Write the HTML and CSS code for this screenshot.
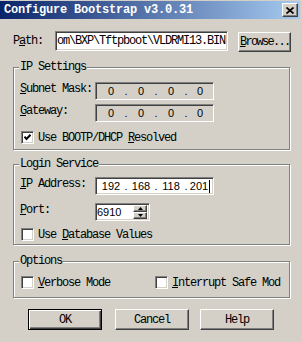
FILE: index.html
```html
<!DOCTYPE html>
<html>
<head>
<meta charset="utf-8">
<link rel="stylesheet" href="styles.css">
</head>
<body>
<div class="window">
  <div class="titlebar">
    <span class="title">Configure Bootstrap v3.0.31</span>
    <span class="close"><svg width="8" height="7" viewBox="0 0 8 7"><path d="M0.5 0.5 L7.5 6.5 M7.5 0.5 L0.5 6.5" stroke="#000" stroke-width="1.7" fill="none"/></svg></span>
  </div>
  <div class="content">
    <div class="path-row">
      <span class="path-label">P<u>a</u>th:</span>
      <div class="sunken path-box">om\BXP\Tftpboot\VLDRMI13.BIN</div>
      <button class="btn browse"><u>B</u>rowse...</button>
    </div>

    <fieldset class="group ip-group">
      <legend>IP Settings</legend>
      <div class="row">
        <span class="label"><u>S</u>ubnet Mask:</span>
        <div class="sunken ipbox disabled">
          <span class="seg">0</span><span class="dot">.</span><span class="seg">0</span><span class="dot">.</span><span class="seg">0</span><span class="dot">.</span><span class="seg last">0</span>
        </div>
      </div>
      <div class="row row-gap">
        <span class="label"><u>G</u>ateway:</span>
        <div class="sunken ipbox disabled">
          <span class="seg">0</span><span class="dot">.</span><span class="seg">0</span><span class="dot">.</span><span class="seg">0</span><span class="dot">.</span><span class="seg last">0</span>
        </div>
      </div>
      <div class="check-row cr-ip">
        <span class="sunken checkbox"><svg width="7" height="7" viewBox="0 0 7 7"><path d="M0.5 2.5 L2.5 5 L6.5 0.8" stroke="#000" stroke-width="2" fill="none"/></svg></span>
        <span class="check-label">Use BOOTP/DHCP <u>R</u>esolved</span>
      </div>
    </fieldset>

    <fieldset class="group login-group">
      <legend>Login Service</legend>
      <div class="row">
        <span class="label"><u>I</u>P Address:</span>
        <div class="sunken ipbox white">
          <span class="seg">192</span><span class="dot">.</span><span class="seg">168</span><span class="dot">.</span><span class="seg">118</span><span class="dot">.</span><span class="seg last">201<span class="caret"></span></span>
        </div>
      </div>
      <div class="row port-row">
        <span class="label"><u>P</u>ort:</span>
        <div class="sunken portbox">
          <span class="port-val">6910</span>
          <span class="spin">
            <span class="spin-btn"><svg width="5" height="3" viewBox="0 0 5 3"><path d="M2.5 0 L5 3 L0 3 Z" fill="#000"/></svg></span>
            <span class="spin-btn"><svg width="5" height="3" viewBox="0 0 5 3"><path d="M0 0 L5 0 L2.5 3 Z" fill="#000"/></svg></span>
          </span>
        </div>
      </div>
      <div class="check-row cr-login">
        <span class="sunken checkbox"></span>
        <span class="check-label">Use <u>D</u>atabase Values</span>
      </div>
    </fieldset>

    <fieldset class="group opt-group">
      <legend>Options</legend>
      <div class="check-row opt-row">
        <div class="opt-item first">
          <span class="sunken checkbox"></span>
          <span class="check-label"><u>V</u>erbose Mode</span>
        </div>
        <div class="opt-item">
          <span class="sunken checkbox"></span>
          <span class="check-label"><u>I</u>nterrupt Safe Mod</span>
        </div>
      </div>
    </fieldset>

    <div class="buttons">
      <button class="btn big default">OK</button>
      <button class="btn big cancel">Cancel</button>
      <button class="btn big help">Help</button>
    </div>
  </div>
</div>
</body>
</html>
```

FILE: styles.css
```css
* { box-sizing: border-box; }

body {
  margin: 0;
  width: 302px;
  height: 342px;
  overflow: hidden;
  background: #d4d0c8;
  font-family: "Liberation Mono", monospace;
  font-size: 12px;
  letter-spacing: -1.2px;
  color: #000;
}

.window {
  width: 302px;
  height: 342px;
  padding-top: 1px;
}

.titlebar {
  height: 18px;
  margin-right: 2px;
  display: flex;
  align-items: center;
  justify-content: space-between;
  padding-left: 4px;
  padding-right: 2px;
  background: linear-gradient(to right, #0a246a, #a6caf0);
}

.title {
  color: #fff;
  font-weight: bold;
  letter-spacing: -0.2px;
  line-height: 14px;
}

.close {
  width: 16px;
  height: 14px;
  display: flex;
  align-items: center;
  justify-content: center;
  background: #d4d0c8;
  border: 1px solid;
  border-color: #fff #404040 #404040 #fff;
  box-shadow: inset -1px -1px #808080;
}

.content {
  padding-left: 13px;
}

.sunken {
  border: 1px solid;
  border-color: #808080 #fff #fff #808080;
  box-shadow: inset 1px 1px #404040, inset -1px -1px #d4d0c8;
}

.path-row {
  margin-top: 12px;
  height: 21px;
  display: flex;
  align-items: flex-start;
}

.path-label {
  width: 42px;
  flex: none;
  line-height: 20px;
  white-space: nowrap;
}

.path-box {
  width: 173px;
  flex: none;
  height: 20px;
  background: #fff;
  padding-left: 1px;
  line-height: 18px;
  white-space: nowrap;
  overflow: hidden;
}

.btn {
  font-family: "Liberation Mono", monospace;
  font-size: 12px;
  color: #000;
  background: #d4d0c8;
  border: 1px solid;
  border-color: #fff #404040 #404040 #fff;
  box-shadow: inset -1px -1px #808080;
  padding: 0;
  margin: 0;
}

.browse {
  flex: none;
  margin-left: 10px;
  margin-top: 1px;
  width: 53px;
  height: 20px;
  letter-spacing: -1.7px;
  text-align: left;
  padding-left: 1px;
  white-space: nowrap;
  overflow: hidden;
}

.group {
  width: 277px;
  margin: 0;
  padding: 0 6px;
  border: 1px solid #808080;
  box-shadow: inset 1px 1px #fff, 1px 1px #fff;
  min-width: 0;
}

.group legend {
  padding: 0 1px;
  margin-left: -1px;
  line-height: 13px;
  background: #d4d0c8;
}

.ip-group {
  margin-top: 9px;
  padding-top: 8px;
  padding-bottom: 5px;
}

.login-group {
  margin-top: 8px;
  padding-top: 6px;
  padding-bottom: 3px;
}

.opt-group {
  margin-top: 10px;
  padding-top: 8px;
  padding-bottom: 8px;
}

.row {
  display: flex;
  align-items: flex-start;
  height: 18px;
}

.row-gap { margin-top: 4px; }
.port-row { margin-top: 8px; }

.label {
  width: 75px;
  flex: none;
  line-height: 14px;
  white-space: nowrap;
}

.ipbox {
  width: 119px;
  height: 18px;
  display: flex;
  align-items: center;
  padding-left: 3px;
  font-family: "Liberation Sans", Arial, sans-serif;
  font-size: 11px;
  letter-spacing: 0;
  overflow: hidden;
}

.disabled { background: #d4d0c8; }
.white { background: #fff; }

.seg {
  width: 24px;
  flex: none;
  text-align: center;
}

.seg.last {
  width: 22px;
  display: flex;
  justify-content: center;
  align-items: center;
}

.dot {
  width: 6px;
  flex: none;
  text-align: center;
}

.caret {
  display: inline-block;
  width: 1px;
  height: 13px;
  background: #000;
  margin-left: 1px;
}

.portbox {
  width: 55px;
  height: 18px;
  background: #fff;
  display: flex;
  align-items: center;
  justify-content: space-between;
  padding: 2px 2px 2px 1px;
  font-family: "Liberation Sans", Arial, sans-serif;
  font-size: 11px;
  letter-spacing: 0;
}

.spin {
  width: 14px;
  height: 14px;
  display: flex;
  flex-direction: column;
}

.spin-btn {
  flex: 1;
  display: flex;
  align-items: center;
  justify-content: center;
  background: #d4d0c8;
  border: 1px solid;
  border-color: #fff #404040 #404040 #fff;
  box-shadow: inset -1px -1px #808080;
}

.check-row {
  display: flex;
  align-items: center;
  height: 13px;
}

.cr-ip { margin-top: 9px; }
.cr-login { margin-top: 7px; }

.checkbox {
  width: 13px;
  height: 13px;
  flex: none;
  margin-left: 1px;
  margin-right: 4px;
  background: #fff;
  display: flex;
  align-items: center;
  justify-content: center;
}

.check-label {
  white-space: nowrap;
}

.opt-row { align-items: center; }

.opt-item {
  display: flex;
  align-items: center;
}

.opt-item.first { width: 134px; }

.buttons {
  margin-top: 11px;
  display: flex;
  padding-left: 15px;
}

.big {
  width: 74px;
  height: 21px;
  letter-spacing: -1.2px;
}

.default {
  border: 1px solid #000;
  box-shadow: inset 1px 1px #fff, inset -1px -1px #404040, inset -2px -2px #808080;
}

.cancel { margin-left: 13px; }
.help { margin-left: 11px; }
```
